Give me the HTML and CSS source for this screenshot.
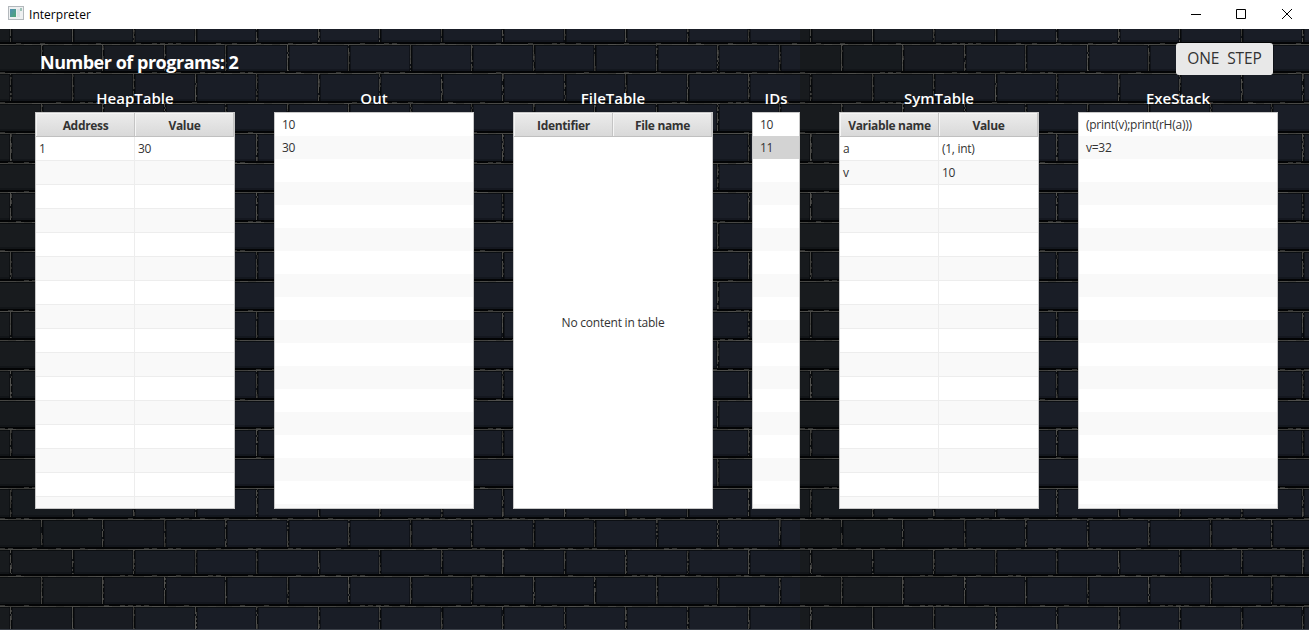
FILE: index.html
```html
<!DOCTYPE html>
<html lang="en">
<head>
<meta charset="utf-8">
<title>Interpreter</title>
<link rel="stylesheet" href="styles.css">
</head>
<body>
<div class="window">
  <header class="titlebar">
    <svg class="app-icon" width="16" height="14" viewBox="0 0 16 14">
      <defs><linearGradient id="ig" x1="0" y1="0" x2="1" y2="1"><stop offset="0" stop-color="#4f8fb5"/><stop offset="1" stop-color="#4fa673"/></linearGradient></defs>
      <rect x=".5" y=".5" width="15" height="13" fill="#eef0f1" stroke="#b3b8bc"/>
      <rect x="2" y="3" width="6" height="8" fill="url(#ig)"/>
      <rect x="9" y="3" width="3" height="8" fill="#dfe3e6"/>
      <rect x="12" y="2" width="2" height="3" fill="#9fc3b8"/>
    </svg>
    <span class="title">Interpreter</span>
    <svg class="controls" width="110" height="28" viewBox="0 0 110 28" fill="none" stroke="#000">
      <path d="M1 13.5h10M46.500 8.500h9v9h-9z"/>
      <path d="M92 8l10 10M102 8l-10 10"/>
    </svg>
  </header>
  <main class="scene">
    <svg class="wall" id="wall" width="1309" height="601" viewBox="0 29 1309 601"></svg>
    <div class="content">
      <div class="topline">
        <span class="count">Number of programs: 2</span>
        <button class="step">ONE&nbsp; STEP</button>
      </div>
      <div class="panels">
        <section class="panel"><h2>HeapTable</h2>
          <div class="box table"><div class="head"><span>Address</span><span>Value</span></div>
            <div class="rows"><div class="cell">1</div><div class="cell">30</div></div></div></section>
        <section class="panel"><h2>Out</h2>
          <div class="box list"><div>10</div><div>30</div></div></section>
        <section class="panel"><h2>FileTable</h2>
          <div class="box table"><div class="head"><span>Identifier</span><span>File name</span></div>
            <div class="empty">No content in table</div></div></section>
        <section class="panel narrow"><h2>IDs</h2>
          <div class="box list"><div>10</div><div class="selected">11</div></div></section>
        <section class="panel"><h2>SymTable</h2>
          <div class="box table"><div class="head"><span>Variable name</span><span>Value</span></div>
            <div class="rows"><div class="cell">a</div><div class="cell">(1, int)</div><div class="cell">v</div><div class="cell">10</div></div></div></section>
        <section class="panel"><h2>ExeStack</h2>
          <div class="box list"><div>(print(v);print(rH(a)))</div><div>v=32</div></div></section>
      </div>
    </div>
  </main>
</div>
<script src="wall.js"></script>
</body>
</html>
```
FILE: styles.css
```css
* { box-sizing: border-box; }
body { margin: 0; font-family: "Open Sans", "Noto Sans", sans-serif; font-size: 12px; color: #333; overflow: hidden; }
.window { width: 1309px; height: 630px; display: flex; flex-direction: column; }
.titlebar { height: 29px; background: #fff; display: flex; align-items: center; padding: 0 9px 0 8px; }
.app-icon { margin-bottom: 3px; }
.title { margin-left: 5px; font-size: 12px; letter-spacing: .03px; color: #000; flex: 1; }
.controls { width: 110px; }
.scene { position: relative; flex: 1; background: #1a1f27; }
.wall { position: absolute; inset: 0; display: block; }
.content { position: relative; padding: 14px 31px 0 35px; }
.topline { display: flex; justify-content: space-between; height: 46px; padding: 0 5px; }
.count { color: #fff; font-size: 18px; font-weight: 700; line-height: 38px; letter-spacing: -.48px; white-space: nowrap; }
.step { height: 32px; width: 97px; padding: 0 0 2px; border: 0; border-radius: 3px; background: #e8e8e8; color: #333; font: 15.5px/30px "Open Sans", sans-serif; letter-spacing: -.1px; white-space: nowrap; }
.panels { display: flex; justify-content: space-between; }
.panel { width: 200px; }
.narrow { width: 48px; }
.panel h2 { margin: 0; height: 23px; line-height: 18px; text-align: center; color: #fff; font-size: 15px; font-weight: 600; letter-spacing: 0; }
.box { height: 397px; border: 1px solid #c8c8c8; background: #fff; overflow: hidden; }
.head { display: flex; height: 24px; border-bottom: 1px solid #c0c0c0; background: linear-gradient(#ececec, #d9d9d9); font-weight: 700; }
.head span { flex: 1; padding-left: 1px; text-align: center; line-height: 26px; border-right: 1px solid #c4c4c4; box-shadow: inset 1px 1px #f5f5f5; letter-spacing: -.33px; white-space: nowrap; }
.rows { height: 371px; display: grid; grid-template-columns: 99px 99px; grid-auto-rows: 24px; align-content: start; background: linear-gradient(#ededed, #ededed) 98px 0 / 1px 100% no-repeat, repeating-linear-gradient(#fff 0 23px, #ededed 23px 24px, #f9f9f9 24px 47px, #ededed 47px 48px); }
.cell { padding-left: 3px; line-height: 24px; letter-spacing: -.3px; }
.empty { height: 371px; display: flex; align-items: center; justify-content: center; letter-spacing: -.22px; }
.list { background: repeating-linear-gradient(#fff 0 23px, #f9f9f9 23px 46px); }
.list div { height: 23px; line-height: 23px; padding-left: 7px; letter-spacing: -.26px; }
.list .selected { background: #d3d3d3; }
```
FILE: wall.js
```js
// Draws the brick wall: an 800px-wide texture repeated across the scene.
const rows = [14, 43.5, 73, 103, 133, 162.5, 192, 222, 251, 281, 310.5, 340, 370, 400, 429, 458, 488, 518.5, 548.5, 576, 606, 636];
const period = 800 / 13;
const rect = (x, y, w, h, fill) => `<rect x="${x}" y="${y}" width="${w}" height="${h}" fill="${fill}"/>`;
let out = rect(0, 29, 1309, 601, '#1a1e26');
for (let tile = 0; tile < 1309; tile += 800) {
  let seed = 48271;
  const rnd = () => (seed = (seed * 16807) % 2147483647) / 2147483647;
  for (let r = 0; r + 1 < rows.length; r++) {
    const top = Math.round(rows[r]), bottom = Math.round(rows[r + 1]);
    const height = bottom - top;
    const start = r % 2 ? 41.5 : 11;
    for (let c = -1; c < 13; c++) {
      const x = start + c * period;
      const left = Math.max(0, x), right = Math.min(800, x + period);
      const edge = Math.min(1, (c + 1) / 4);
      const v = rnd() * 2;
      const color = `rgb(${23 + v + edge * 2 | 0},${26 + v + edge * 3 | 0},${29 + v + edge * 9 | 0})`;
      out += rect(tile + left, top, right - left, height, color);
      // Darker lower band and edge shading within each brick
      out += rect(tile + left, bottom - 4, right - left, 2, 'rgba(8,10,13,.3)');
      out += rect(tile + left, top + 1, right - left, 1, 'rgba(5,7,9,.65)');
    }
    for (let c = 0; c < 13; c++) {
      const jx = Math.round(tile + start + c * period);
      out += rect(jx - 2, top, 4, height, 'rgba(5,7,8,.45)');
      out += rect(jx, top, 1, height, '#07090a');
      const tone = 58 + rnd() * 22;
      for (let y = top; y < bottom - 2; y += 2) {
        const g = tone + rnd() * 18 - 9 | 0;
        if (rnd() > .13) out += rect(jx - 1, y, 1, 2, `rgb(${g},${g},${g - 3})`);
        if (rnd() > .72) out += rect(jx, y, 1, 2, `rgb(${g - 22},${g - 22},${g - 23})`);
      }
    }
    out += rect(tile, bottom - 2, 800, 2, '#030405');
  }
  // Mortar highlights along the top edge of each course
  for (let r = 1; r < rows.length - 1; r++) {
    const y = Math.round(rows[r]);
    for (let x = 0; x < 800; x += 8) {
      const g = 58 + rnd() * 24 | 0;
      out += rect(tile + x, y, 8, 1, `rgb(${g},${g},${g - 3})`);
      if (rnd() > .75) out += rect(tile + x, y - 1, 5, 1, '#303130');
    }
  }
}
out += rect(0, 629, 1309, 1, '#3a3f47');
document.getElementById('wall').innerHTML = out;
```
